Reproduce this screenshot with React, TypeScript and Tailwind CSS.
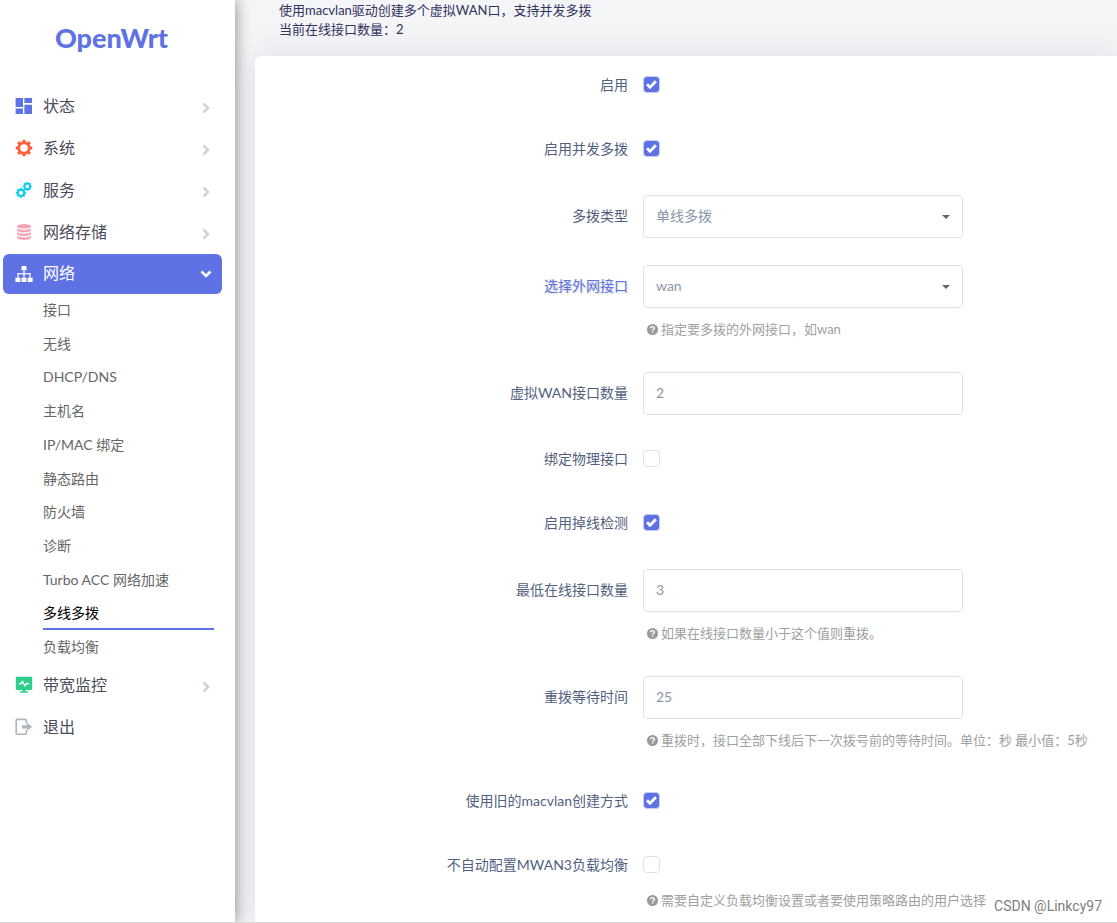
import { useState } from "react";
import type { ReactNode } from "react";

const GEAR_ANGLES = [0, 45, 90, 135, 180, 225, 270, 315];

function Gear({ cx, cy, r, ring, tooth }: { cx: number; cy: number; r: number; ring: number; tooth: number }) {
  return (
    <g>
      <circle cx={cx} cy={cy} r={r} fill="none" stroke="currentColor" strokeWidth={ring} />
      {GEAR_ANGLES.map((angle) => (
        <rect
          key={angle}
          x={cx - tooth / 2}
          y={cy - r - ring / 2 - tooth * 0.5}
          width={tooth}
          height={tooth}
          fill="currentColor"
          transform={`rotate(${angle} ${cx} ${cy})`}
        />
      ))}
    </g>
  );
}

function Svg({ className, children }: { className: string; children: ReactNode }) {
  return (
    <svg viewBox="0 0 18 18" className={`h-[18px] w-[18px] shrink-0 ${className}`} fill="currentColor" aria-hidden="true">
      {children}
    </svg>
  );
}

const StatusIcon = (
  <Svg className="text-[#5e72e4]">
    <path d="M.6 1h7.400v9H.6zM9.400 1H17v5H9.400zM.6 11.600h7.400V17H.6zM9.400 7.800H17V17H9.400z" />
  </Svg>
);

const SystemIcon = (
  <Svg className="text-[#fb6340]">
    <Gear cx={9} cy={9} r={5.2} ring={2.8} tooth={3.2} />
  </Svg>
);

const ServicesIcon = (
  <Svg className="text-[#11cdef]">
    <Gear cx={6} cy={11.8} r={3.1} ring={2} tooth={2} />
    <Gear cx={12.3} cy={5.4} r={2.7} ring={1.8} tooth={1.8} />
  </Svg>
);

const StorageIcon = (
  <Svg className="text-[#f3a4b5]">
    <ellipse cx="9" cy="3.4" rx="7" ry="2.4" />
    <path d="M2 5.2c1.4 1.2 4 1.7 7 1.7s5.600-.5 7-1.700v1.700c0 1.300-3.100 2.400-7 2.400s-7-1.100-7-2.400z" />
    <path d="M2 9c1.400 1.200 4 1.700 7 1.700s5.600-.5 7-1.700v1.700c0 1.300-3.100 2.400-7 2.400s-7-1.100-7-2.400z" />
    <path d="M2 12.800c1.400 1.200 4 1.700 7 1.700s5.600-.5 7-1.700v1.700c0 1.300-3.100 2.400-7 2.400s-7-1.100-7-2.400z" />
  </Svg>
);

const NetworkIcon = (
  <Svg className="text-white">
    <rect x="6.500" y="1" width="5" height="4.300" />
    <rect x="8.400" y="5" width="1.200" height="8" />
    <rect x="2.400" y="8.200" width="13.200" height="1.200" />
    <rect x="2.400" y="8.200" width="1.200" height="5" />
    <rect x="14.400" y="8.200" width="1.200" height="5" />
    <rect x=".4" y="12.700" width="5" height="4.300" />
    <rect x="6.500" y="12.700" width="5" height="4.300" />
    <rect x="12.600" y="12.700" width="5" height="4.300" />
  </Svg>
);

const BandwidthIcon = (
  <Svg className="text-[#2dce89]">
    <path d="M1.800.8h14.400a1 1 0 0 1 1 1v11.200a1 1 0 0 1-1 1h-5.700v1.200h2.500V16.700H5v-1.500h2.500V14H1.800a1 1 0 0 1-1-1V1.800a1 1 0 0 1 1-1z" />
    <path d="M3.800 7.600h2.300l1.300-2.200 2.500 4.400L11.500 7.600h2.700" fill="none" stroke="white" strokeWidth="1.400" />
  </Svg>
);

const LogoutIcon = (
  <Svg className="text-[#adb5bd]">
    <path
      d="M11.300 5.500V2.400a1 1 0 0 0-1-1H2.200a1 1 0 0 0-1 1v12.800a1 1 0 0 0 1 1h8.100a1 1 0 0 0 1-1V12"
      fill="none"
      stroke="currentColor"
      strokeWidth="1.600"
    />
    <path d="M7 7.200h5V4.800l5.200 4-5.200 4v-2.400H7z" />
  </Svg>
);

interface MenuEntry {
  label: string;
  icon: ReactNode;
  arrow: boolean;
}

const topMenu: MenuEntry[] = [
  { label: "状态", icon: StatusIcon, arrow: true },
  { label: "系统", icon: SystemIcon, arrow: true },
  { label: "服务", icon: ServicesIcon, arrow: true },
  { label: "网络存储", icon: StorageIcon, arrow: true },
];

const bottomMenu: MenuEntry[] = [
  { label: "带宽监控", icon: BandwidthIcon, arrow: true },
  { label: "退出", icon: LogoutIcon, arrow: false },
];

const subMenu = [
  "接口",
  "无线",
  "DHCP/DNS",
  "主机名",
  "IP/MAC 绑定",
  "静态路由",
  "防火墙",
  "诊断",
  "Turbo ACC 网络加速",
  "多线多拨",
  "负载均衡",
];

function MenuLink({ entry, open = false }: { entry: MenuEntry; open?: boolean }) {
  return (
    <a
      href="#"
      className={`flex h-10 items-center rounded-md pr-[10px] pl-3 text-base ${
        open ? "bg-[#5e72e4] text-white" : "text-[#4b4b5a]"
      }`}
    >
      {entry.icon}
      <span className={`ml-[10px] flex-1 leading-6 ${open ? "pb-[3px]" : "pb-px"}`}>{entry.label}</span>
      {entry.arrow && (
        <svg viewBox="0 0 12 12" className={`h-3 w-3 ${open ? "text-white" : "mt-[3px] text-[#ced4da]"}`} aria-hidden="true">
          <path
            d={open ? "M1.500 3.500L6 8l4.500-4.500" : "M3.500 1.500L8 6l-4.500 4.500"}
            fill="none"
            stroke="currentColor"
            strokeWidth="2.600"
          />
        </svg>
      )}
    </a>
  );
}

function Sidebar() {
  return (
    <aside className="relative z-10 w-[235px] shrink-0 bg-white shadow-[0_0_14px_1px_rgba(0,0,0,0.4)]">
      <a href="#" className="flex h-[86px] items-start justify-center pt-[22px] pr-3 text-[27px] leading-8 font-black text-[#5e72e4]">
        OpenWrt
      </a>
      <nav className="pr-[13px] pl-[3px]">
        <ul className="flex flex-col gap-0.5">
          {topMenu.map((entry) => (
            <li key={entry.label}>
              <MenuLink entry={entry} />
            </li>
          ))}
          <li>
            <MenuLink entry={{ label: "网络", icon: NetworkIcon, arrow: true }} open />
          </li>
        </ul>
        <ul className="grid h-[371px] grid-rows-11 pr-2 pl-10">
          {subMenu.map((label) => (
            <li
              key={label}
              className={label === "多线多拨" ? "-mt-px mb-px border-b-2 border-[#5e72e4] text-black" : "text-[#666666]"}
            >
              <a href="#" className="block pt-1.5 text-sm leading-5">
                {label}
              </a>
            </li>
          ))}
        </ul>
        <ul className="flex flex-col gap-0.5">
          {bottomMenu.map((entry) => (
            <li key={entry.label}>
              <MenuLink entry={entry} />
            </li>
          ))}
        </ul>
      </nav>
    </aside>
  );
}

function Hint({ children, tight = false }: { children: ReactNode; tight?: boolean }) {
  return (
    <p
      className={`flex items-center gap-[3px] pl-1 text-[13px] leading-5 whitespace-nowrap text-[#a0a0a0] ${
        tight ? "pt-2" : "pt-[11px] pb-1.5"
      }`}
    >
      <svg viewBox="0 0 12 12" className="h-[11px] w-[11px] shrink-0" aria-hidden="true">
        <circle cx="6" cy="6" r="6" fill="#999999" />
        <path d="M4 4.700c0-1.200.9-1.900 2.100-1.900 1.100 0 2 .7 2 1.700 0 1.300-1.900 1.400-1.900 2.600" fill="none" stroke="white" strokeWidth="1.500" />
        <rect x="5.300" y="8" width="1.600" height="1.500" fill="white" />
      </svg>
      <span>{children}</span>
    </p>
  );
}

function Row({ id, label, highlighted = false, check = false, gap, children, hint }: {
  id: string;
  label: string;
  highlighted?: boolean;
  check?: boolean;
  gap: string;
  children: ReactNode;
  hint?: string;
}) {
  return (
    <div className={`flex items-start ${gap}`}>
      <label
        htmlFor={id}
        className={`w-[373px] shrink-0 text-right text-sm ${check ? "leading-[35px]" : "leading-[42px]"} ${
          highlighted ? "text-[#5e72e4] [text-shadow:1px_1px_2px_#cccccc]" : "text-[#525f7f]"
        }`}
      >
        {label}
      </label>
      <div className="ml-[15px] min-w-0 flex-1">
        {children}
        {hint && <Hint tight={check}>{hint}</Hint>}
      </div>
    </div>
  );
}

function CheckRow({ id, label, initial = false, hint }: { id: string; label: string; initial?: boolean; hint?: string }) {
  const [on, setOn] = useState(initial);
  return (
    <Row id={id} label={label} check gap={hint ? "pb-0" : "pb-[29px]"} hint={hint}>
      <div className="flex h-[35px] items-center">
        <span className="relative flex h-[17px] w-[17px]">
          <input
            id={id}
            type="checkbox"
            checked={on}
            onChange={(e) => setOn(e.target.checked)}
            className="h-[17px] w-[17px] appearance-none rounded-sm border border-[#dee2e6] bg-white checked:border-[#c5cdf5] checked:bg-[#5e72e4]"
          />
          {on && (
            <svg viewBox="0 0 17 17" className="pointer-events-none absolute inset-0" aria-hidden="true">
              <path d="M4 8.200l3 3 5.900-6" fill="none" stroke="white" strokeWidth="2.800" />
            </svg>
          )}
        </span>
      </div>
    </Row>
  );
}

const fieldClass =
  "block h-[43px] w-full appearance-none rounded-sm border border-[#dee2e6] bg-white px-3 pb-0.5 text-sm text-[#8898aa] outline-none";

function SelectRow({ id, label, option, highlighted, hint }: {
  id: string;
  label: string;
  option: string;
  highlighted?: boolean;
  hint?: string;
}) {
  return (
    <Row id={id} label={label} highlighted={highlighted} gap="pb-[27px]" hint={hint}>
      <div className="relative w-80">
        <select id={id} className={fieldClass}>
          <option>{option}</option>
        </select>
        <svg viewBox="0 0 8 4" className="pointer-events-none absolute top-5 right-[13px] h-1 w-2" aria-hidden="true">
          <path d="M0 0h8L4 4z" fill="#666666" />
        </svg>
      </div>
    </Row>
  );
}

function InputRow({ id, label, value, hint }: { id: string; label: string; value: string; hint?: string }) {
  return (
    <Row id={id} label={label} gap={hint ? "pb-[27px]" : "pb-[26px]"} hint={hint}>
      <div className="w-80">
        <input id={id} type="text" defaultValue={value} className={fieldClass} />
      </div>
    </Row>
  );
}

export default function App() {
  return (
    <div
      lang="zh-CN"
      className="relative flex min-h-screen overflow-hidden border-b border-[#d8d8d8] bg-[#f4f5f7] font-['Lato','Noto_Sans_CJK_SC',sans-serif]"
    >
      <Sidebar />
      <main className="flex min-w-0 flex-1 flex-col pl-5">
        <div className="h-14 pt-px pl-6 text-[13px] leading-[19px] text-[#32325d]">
          <p>使用macvlan驱动创建多个虚拟WAN口，支持并发多拨</p>
          <p>当前在线接口数量：2</p>
        </div>
        <form className="flex-1 rounded-tl-md bg-white pt-[11px] shadow-[0_0_32px_0_rgba(90,100,120,0.15)]">
          <CheckRow id="enabled" label="启用" initial />
          <CheckRow id="syncdial" label="启用并发多拨" initial />
          <SelectRow id="dialtype" label="多拨类型" option="单线多拨" />
          <SelectRow id="wansel" label="选择外网接口" option="wan" highlighted hint="指定要多拨的外网接口，如wan" />
          <InputRow id="wannum" label="虚拟WAN接口数量" value="2" />
          <CheckRow id="bindphys" label="绑定物理接口" />
          <CheckRow id="dialchk" label="启用掉线检测" initial />
          <InputRow id="dialnum" label="最低在线接口数量" value="3" hint="如果在线接口数量小于这个值则重拨。" />
          <InputRow
            id="dialwait"
            label="重拨等待时间"
            value="25"
            hint="重拨时，接口全部下线后下一次拨号前的等待时间。单位：秒 最小值：5秒"
          />
          <CheckRow id="oldmacvlan" label="使用旧的macvlan创建方式" initial />
          <CheckRow id="nomwan" label="不自动配置MWAN3负载均衡" hint="需要自定义负载均衡设置或者要使用策略路由的用户选择" />
        </form>
      </main>
      <span className="absolute right-[15px] bottom-[6px] z-20 font-['Roboto',sans-serif] text-sm leading-5 text-[#808080]">
        CSDN @Linkcy97
      </span>
    </div>
  );
}
